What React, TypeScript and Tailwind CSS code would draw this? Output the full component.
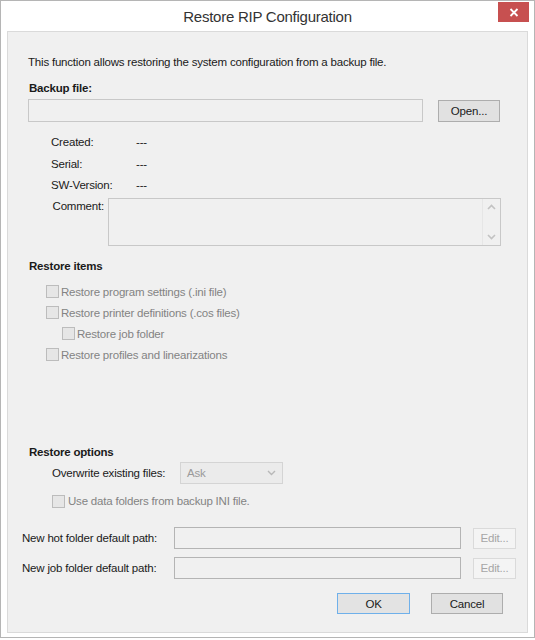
import React from "react";

const font = { fontFamily: '"Liberation Sans", Arial, sans-serif' };

function Checkbox() {
  return <div className="w-[13px] h-[13px] border border-[#bcbcbc] bg-[#e6e6e6] shrink-0" />;
}

function CheckRow({ label, indent }: { label: string; indent?: boolean }) {
  return (
    <div className={`h-[21px] flex items-center gap-[2px] whitespace-nowrap ${indent ? "ml-[54px]" : "ml-[38px]"}`}>
      <Checkbox />
      <span className="text-[#838383]">{label}</span>
    </div>
  );
}

function InfoRow({ label, top }: { label: string; top: string }) {
  return (
    <div className={`h-[16px] flex items-center ${top}`}>
      <span className="ml-[43px] w-[85px] text-[#1a1a1a]">{label}</span>
      <span className="text-[#1a1a1a]">---</span>
    </div>
  );
}

export default function App() {
  return (
    <div className="w-[535px] h-[640px] bg-white" style={font}>
      <div className="w-[535px] h-[638px] border border-[#b5b5b5] bg-white flex flex-col text-[11.5px] tracking-[-0.2px] leading-[16px] text-[#1a1a1a]">
        <div className="h-[30px] grid grid-cols-[1fr_auto_1fr] items-start shrink-0">
          <div />
          <div className="pt-[6px] text-[15px] tracking-[-0.25px] leading-[20px] text-[#333333] whitespace-nowrap">Restore RIP Configuration</div>
          <div className="flex justify-end pr-[5px]">
            <div className="w-[31px] h-[20px] bg-[#c75050] flex items-center justify-center mt-[1px]">
              <svg width="10" height="9" viewBox="0 0 10 9">
                <path d="M1.5 1 L8.5 8 M8.5 1 L1.5 8" stroke="white" strokeWidth="1.8" />
              </svg>
            </div>
          </div>
        </div>
        <div className="mx-[6px] mb-[4px] flex-1 border border-[#dadada] bg-[#f0f0f0] flex flex-col whitespace-nowrap">
          <div className="mt-[22px] ml-[20px] h-[16px]">This function allows restoring the system configuration from a backup file.</div>
          <div className="mt-[10px] ml-[21px] h-[16px] font-bold">Backup file:</div>
          <div className="mt-[3px] ml-[20px] flex items-center">
            <div className="w-[395px] h-[23px] border border-[#c8c8c8] bg-[#f0f0f0]" />
            <div className="ml-[15px] w-[62px] h-[22px] border border-[#adadad] bg-[#e1e1e1] flex items-center justify-center">Open...</div>
          </div>
          <InfoRow label="Created:" top="mt-[12px]" />
          <InfoRow label="Serial:" top="mt-[6px]" />
          <InfoRow label="SW-Version:" top="mt-[5px]" />
          <div className="mt-[5px] ml-[20px] flex items-start">
            <div className="w-[76px] text-right pt-[0px]">Comment:</div>
            <div className="ml-[4px] w-[393px] h-[48px] border border-[#c8c8c8] bg-[#f0f0f0] flex justify-end">
              <div className="w-[18px] h-full border-l border-[#e6e6e6] flex flex-col items-center justify-between py-[5px]">
                <svg width="9" height="6" viewBox="0 0 9 6">
                  <path d="M1 5 L4.5 1.5 L8 5" stroke="#c2c2c2" strokeWidth="1.6" fill="none" />
                </svg>
                <svg width="9" height="6" viewBox="0 0 9 6">
                  <path d="M1 1 L4.5 4.5 L8 1" stroke="#c2c2c2" strokeWidth="1.6" fill="none" />
                </svg>
              </div>
            </div>
          </div>
          <div className="mt-[12px] ml-[21px] h-[16px] font-bold">Restore items</div>
          <div className="mt-[7px] flex flex-col">
            <CheckRow label="Restore program settings (.ini file)" />
            <CheckRow label="Restore printer definitions (.cos files)" />
            <CheckRow label="Restore job folder" indent />
            <CheckRow label="Restore profiles and linearizations" />
          </div>
          <div className="mt-[79px] ml-[21px] h-[16px] font-bold">Restore options</div>
          <div className="mt-[2px] ml-[44px] flex items-center h-[22px]">
            <span className="w-[128px]">Overwrite existing files:</span>
            <div className="w-[103px] h-[22px] border border-[#d4d4d4] bg-[#ebebeb] flex items-center justify-between px-[6px] text-[#9a9a9a]">
              <span>Ask</span>
              <svg width="9" height="6" viewBox="0 0 9 6">
                <path d="M1 1 L4.5 4.5 L8 1" stroke="#b8b8b8" strokeWidth="1.4" fill="none" />
              </svg>
            </div>
          </div>
          <div className="mt-[9px] ml-[44px] h-[16px] flex items-center gap-[3px]">
            <Checkbox />
            <span className="text-[#838383]">Use data folders from backup INI file.</span>
          </div>
          <div className="mt-[18px] ml-[14px] flex items-center h-[22px]">
            <span className="w-[152px]">New hot folder default path:</span>
            <div className="w-[287px] h-[22px] border border-[#b4b4b4] bg-[#f0f0f0]" />
            <div className="ml-[12px] w-[43px] h-[21px] border border-[#dadada] bg-[#f4f4f4] flex items-center justify-center text-[#a6a6a6]">Edit...</div>
          </div>
          <div className="mt-[8px] ml-[14px] flex items-center h-[22px]">
            <span className="w-[152px]">New job folder default path:</span>
            <div className="w-[287px] h-[22px] border border-[#b4b4b4] bg-[#f0f0f0]" />
            <div className="ml-[12px] w-[43px] h-[21px] border border-[#dadada] bg-[#f4f4f4] flex items-center justify-center text-[#a6a6a6]">Edit...</div>
          </div>
          <div className="mt-[14px] ml-[329px] flex items-center">
            <div className="w-[73px] h-[21px] border border-[#6fb0ea] bg-[#e3e3e3] flex items-center justify-center">OK</div>
            <div className="ml-[21px] w-[72px] h-[21px] border border-[#adadad] bg-[#e1e1e1] flex items-center justify-center">Cancel</div>
          </div>
        </div>
      </div>
    </div>
  );
}
